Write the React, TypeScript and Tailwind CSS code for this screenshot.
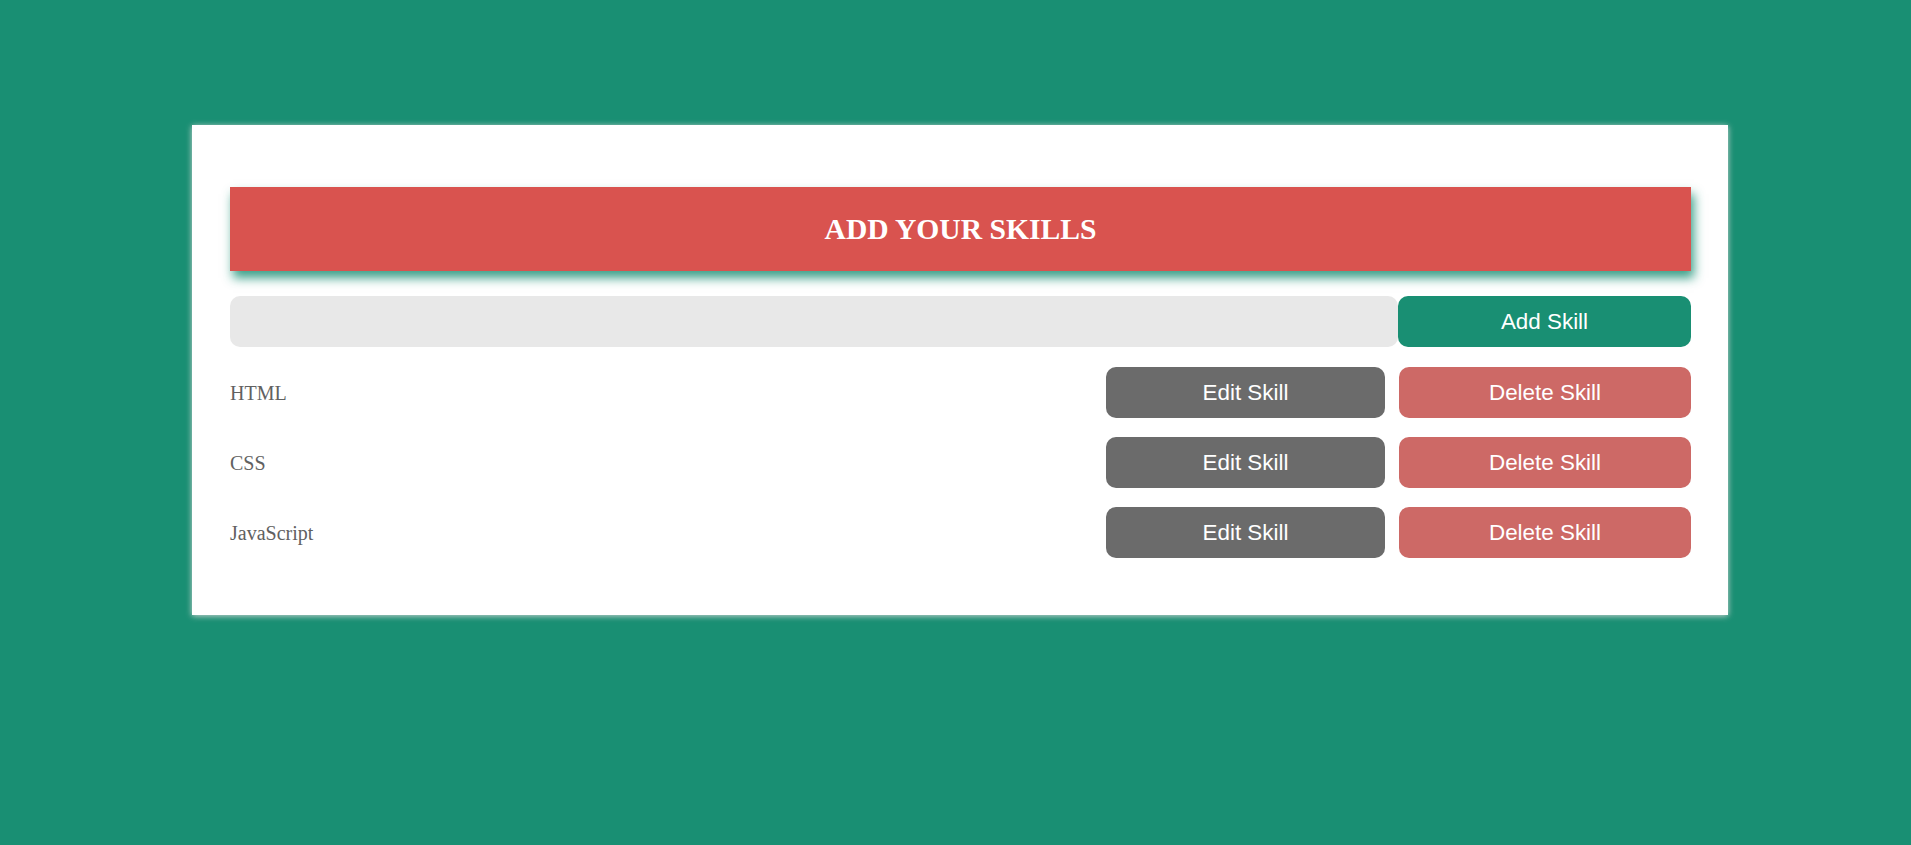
import React from "react";

const skills = ["HTML", "CSS", "JavaScript"];

export default function App() {
  return (
    <div className="min-h-[845px] w-full bg-[#198f73] pt-[125px]">
      <div className="ml-[192px] w-[1536px] bg-white pl-[38px] pr-[37px] pt-[62px] pb-[57px] shadow-[0_1px_6px_rgba(215,215,215,0.95)]">
        <div className="flex h-[84px] items-center justify-center bg-[#d9534f] shadow-[3px_7px_10px_rgba(26,143,116,0.85)]">
          <h1 className="text-[29.6px] font-bold text-white [font-family:'Liberation_Serif',serif]">
            ADD YOUR SKILLS
          </h1>
        </div>
        <div className="mt-[25px] flex h-[51px]">
          <input
            className="h-full flex-1 rounded-[10px] bg-[#e8e8e8] px-3 outline-none"
            type="text"
          />
          <button className="h-full w-[293px] rounded-[10px] bg-[#198f73] text-[22.4px] text-white [font-family:'Liberation_Sans',sans-serif]">
            Add Skill
          </button>
        </div>
        <div className="mt-[20px] flex flex-col gap-[19px]">
          {skills.map((s) => (
            <div key={s} className="flex h-[51px] items-center">
              <span className="flex-1 text-[20px] text-[#616161] [font-family:'Liberation_Serif',serif]">
                {s}
              </span>
              <button className="h-full w-[279px] rounded-[10px] bg-[#6b6b6b] text-[22.4px] text-white [font-family:'Liberation_Sans',sans-serif]">
                Edit Skill
              </button>
              <button className="ml-[14px] h-full w-[292px] rounded-[10px] bg-[#cd6966] text-[22.4px] text-white [font-family:'Liberation_Sans',sans-serif]">
                Delete Skill
              </button>
            </div>
          ))}
        </div>
      </div>
    </div>
  );
}
